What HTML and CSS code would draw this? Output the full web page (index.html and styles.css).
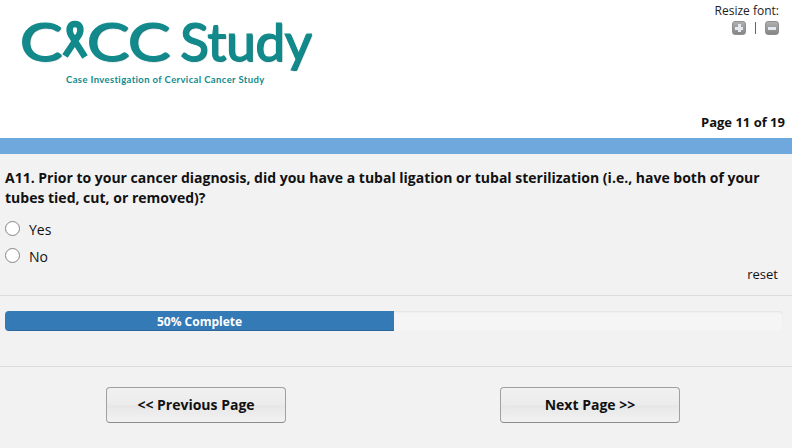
FILE: index.html
```html
<!DOCTYPE html>
<html lang="en">
<head>
<meta charset="utf-8">
<title>CICC Study</title>
<link rel="stylesheet" href="styles.css">
</head>
<body>
<header class="header">
  <div class="header-top">
    <div class="logo">
      <div class="logo-main">
        <span class="logo-c">C</span>
        <svg class="ribbon" width="28" height="42" viewBox="0 0 28 42" aria-hidden="true">
          <path d="M4 36 L18 15 C21 9 19 4 14 4 C9 4 7 9 10 15 L24 37" fill="none" stroke="#128a8c" stroke-width="6.500" stroke-linejoin="round"/>
        </svg>
        <span class="logo-c">C</span><span class="logo-c logo-c-last">C</span><span class="logo-study">Study</span>
      </div>
      <div class="logo-sub">Case Investigation of Cervical Cancer Study</div>
    </div>
    <div class="resize">
      <div>Resize font:</div>
      <div class="resize-icons">
        <span class="resize-btn"><span class="plus"></span></span>
        <span class="resize-sep"></span>
        <span class="resize-btn"><span class="minus"></span></span>
      </div>
    </div>
  </div>
  <div class="page-no">Page 11 of 19</div>
</header>
<div class="band"></div>
<main class="content">
  <h1 class="question">A11. Prior to your cancer diagnosis, did you have a tubal ligation or tubal sterilization (i.e., have both of your tubes tied, cut, or removed)?</h1>
  <label class="option"><input class="radio" type="radio" name="a11"><span>Yes</span></label>
  <label class="option"><input class="radio" type="radio" name="a11"><span>No</span></label>
  <div class="reset">reset</div>
</main>
<section class="progress-wrap">
  <div class="progress"><div class="progress-bar">50% Complete</div></div>
</section>
<nav class="nav">
  <button class="btn" type="button">&lt;&lt; Previous Page</button>
  <button class="btn" type="button">Next Page &gt;&gt;</button>
</nav>
</body>
</html>
```

FILE: styles.css
```css
* { box-sizing: border-box; }
html, body { margin: 0; height: 100%; }
body {
  background: #f2f2f2;
  font-family: "Open Sans", sans-serif;
  color: #111;
  overflow: hidden;
}
.header {
  background: #fff;
  height: 138px;
  display: flex;
  flex-direction: column;
  justify-content: space-between;
  padding: 3px 7px 7px 22px;
}
.header-top { display: flex; justify-content: space-between; align-items: flex-start; }
.logo { padding-top: 12px; width: 300px; }
.logo-main {
  display: flex;
  align-items: center;
  height: 52px;
  font-family: "Lato", sans-serif;
  font-size: 53px;
  line-height: 52px;
  color: #128a8c;
  text-shadow: 1px 1px 1px #0a6264;
  -webkit-text-stroke: 1.2px #128a8c;
}
.logo-c {
  display: inline-block;
  width: 38px;
  text-align: center;
  transform: scaleX(1.2);
}
.logo-c-last { margin-left: 3px; }
.ribbon { margin: 0 0 0 1px; flex: none; }
.logo-study { margin-left: 12px; font-size: 53px; letter-spacing: -0.3px; }
.logo-sub {
  margin: 7px 0 0 44px;
  font-family: "Lato", sans-serif;
  font-weight: 700;
  font-size: 9.500px;
  line-height: 12px;
  letter-spacing: 0.37px;
  color: #128a8c;
  white-space: nowrap;
}
.resize { font-size: 12px; line-height: 16px; text-align: right; color: #222; margin-right: 6px; }
.resize-icons { display: flex; justify-content: flex-end; align-items: center; gap: 9px; margin-top: 2px; }
.resize-btn {
  width: 14px; height: 14px;
  border-radius: 3px;
  background: linear-gradient(#b0b0b0, #858585);
  border: 1px solid #8f8f8f;
  display: flex; align-items: center; justify-content: center;
  position: relative;
}
.minus { width: 8px; height: 3px; background: #e4eaf0; }
.plus { width: 8px; height: 3px; background: #e4eaf0; position: relative; }
.plus::after {
  content: ""; position: absolute; left: 2.500px; top: -2.500px;
  width: 3px; height: 8px; background: #e4eaf0;
}
.resize-sep { width: 1px; height: 12px; background: #b03a6c; }
.page-no { font-size: 13px; font-weight: 700; line-height: 18px; text-align: right; color: #111; }
.band { height: 16px; background: #6fa8dc; }
.content { padding: 14px 5px 0; border-bottom: 1px solid #dcdcdc; height: 142px; }
.question {
  margin: 0 0 8px;
  font-size: 14px;
  font-weight: 700;
  line-height: 20px;
  color: #111;
}
.option { display: flex; align-items: center; height: 27px; font-size: 14px; color: #111; }
.radio {
  appearance: none;
  width: 15px; height: 15px;
  margin: -3px 9px 0 0;
  border: 1.500px solid #858585;
  border-radius: 50%;
  background: #fff;
}
.reset { font-size: 13px; line-height: 16px; text-align: right; padding-right: 9px; margin-top: -4px; }
.progress-wrap { height: 71px; padding: 15px 9px 0 5px; border-bottom: 1px solid #dcdcdc; }
.progress {
  height: 20px;
  background: #f5f5f5;
  border-radius: 4px;
  box-shadow: inset 0 1px 2px rgba(0,0,0,.08);
  overflow: hidden;
}
.progress-bar {
  width: 50%;
  height: 100%;
  background: #337ab7;
  box-shadow: inset 0 -1px 0 rgba(0,0,0,.15);
  color: #fff;
  font-size: 12px;
  font-weight: 700;
  line-height: 21px;
  text-align: center;
}
.nav { display: flex; justify-content: space-between; padding: 20px 112px 0 106px; }
.btn {
  width: 180px; height: 36px;
  border: 1px solid #a0a0a0;
  border-bottom-color: #8c8c8c;
  border-radius: 4px;
  background: linear-gradient(#f1f1f1 0%, #ececec 48%, #e7e7e7 52%, #f2f2f2 100%);
  font-family: "Open Sans", sans-serif;
  font-size: 14px;
  font-weight: 700;
  color: #111;
  padding: 0 0 2px;
}
```
